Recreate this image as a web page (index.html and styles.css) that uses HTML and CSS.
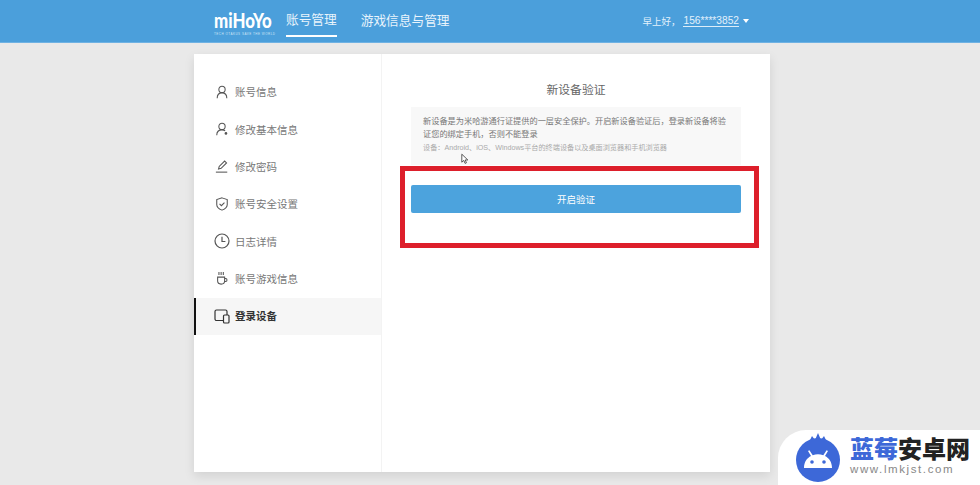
FILE: index.html
```html
<!DOCTYPE html>
<html lang="zh-CN">
<head>
  <meta charset="UTF-8">
  <meta name="viewport" content="width=device-width, initial-scale=1.0">
  <title>登录设备</title>
  <link rel="stylesheet" href="styles.css">
</head>
<body>

  <div class="header">
    <div class="header-inner">
      <div class="logo">
        <div class="logo-name">miHoYo</div>
        <div class="logo-tag">TECH OTAKUS SAVE THE WORLD</div>
      </div>
      <a class="nav-link active" href="#">账号管理</a>
      <a class="nav-link" href="#">游戏信息与管理</a>
      <div class="greeting">
        <span>早上好，</span>
        <a href="#">156****3852</a>
        <i class="caret"></i>
      </div>
    </div>
  </div>

  <div class="card">
    <div class="sidebar">
      <a class="side-item" href="#">
        <svg class="side-icon" viewBox="0 0 16 16"><circle cx="8" cy="5" r="3.6"/><path d="M2.5 15c0-3.6 2-6 5.5-6s5.500 2.400 5.500 6"/></svg>
        账号信息
      </a>
      <a class="side-item" href="#">
        <svg class="side-icon" viewBox="0 0 16 16"><circle cx="8" cy="5" r="3.600"/><path d="M2 15c0-3.600 2.200-6 6-6 1.500 0 2.700.4 3.600 1.100"/><circle class="dot" cx="12.500" cy="13" r="1.500"/></svg>
        修改基本信息
      </a>
      <a class="side-item" href="#">
        <svg class="side-icon" viewBox="0 0 16 16"><path d="M4 11.500l.8-3L11 2.300l2.200 2.200L7 10.700z"/><path d="M1 15h13"/></svg>
        修改密码
      </a>
      <a class="side-item" href="#">
        <svg class="side-icon" viewBox="0 0 16 16"><path d="M8 1l6 2v5.500c0 3.200-2.500 5.200-6 6.500-3.500-1.300-6-3.300-6-6.500V3z"/><path d="M5.200 7.800l2.100 2.100 3.500-3.600"/></svg>
        账号安全设置
      </a>
      <a class="side-item" href="#">
        <svg class="side-icon big" viewBox="0 0 16 16"><circle cx="8" cy="8" r="7"/><path d="M8 3.800V8.500h3.400"/></svg>
        日志详情
      </a>
      <a class="side-item" href="#">
        <svg class="side-icon" viewBox="0 0 16 16"><path d="M3 7h8v4.500c0 2-1.500 3.500-4 3.500s-4-1.500-4-3.500z"/><path d="M11 8.500h1.200c2 0 2 3.500 0 3.500H11"/><path d="M4.500 1v3.500M7 1v3.500M9.500 1v3.500"/></svg>
        账号游戏信息
      </a>
      <a class="side-item active" href="#">
        <svg class="side-icon big" viewBox="0 0 16 16"><path d="M9.500 12.500H2.500a1.500 1.500 0 0 1-1.500-1.500V3.500A1.500 1.500 0 0 1 2.500 2h9A1.500 1.500 0 0 1 13 3.500V7"/><rect x="9.500" y="7" width="5.500" height="8" rx="1"/></svg>
        登录设备
      </a>
    </div>

    <div class="main">
      <h1 class="main-title">新设备验证</h1>
      <div class="notice">
        <p>新设备是为米哈游通行证提供的一层安全保护。开启新设备验证后，登录新设备将验证您的绑定手机，否则不能登录</p>
        <p class="notice-sub">设备：Android、iOS、Windows平台的终端设备以及桌面浏览器和手机浏览器</p>
      </div>
      <button class="btn">开启验证</button>
    </div>
  </div>

  <!-- annotation on top of the screenshot -->
  <div class="red-box"></div>
  <svg class="cursor" viewBox="0 0 10 14"><path d="M1 1v10l2.500-2.200 1.600 3.700 1.700-.8-1.600-3.500H8.500z"/></svg>

  <div class="watermark">
    <svg class="wm-icon" viewBox="0 0 46 50">
      <path class="wm-blue" d="M14 10l3-6 3 4 3-7 3 7 3-4 3 6z"/>
      <circle class="wm-blue" cx="23" cy="28" r="22"/>
      <path class="wm-white" d="M9 36c0-6 3-10 7-12l-3-5 1.400-.8 3.300 5c3.500-1.300 7.100-1.300 10.600 0l3.300-5 1.400.8-3 5c4 2 7 6 7 12z"/>
      <circle class="wm-blue" cx="17" cy="30" r="1.800"/>
      <circle class="wm-blue" cx="29" cy="30" r="1.800"/>
    </svg>
    <div class="wm-text">
      <div class="wm-title"><span>蓝莓</span>安卓网</div>
      <div class="wm-url">www.lmkjst.com</div>
    </div>
  </div>

</body>
</html>
```

FILE: styles.css
```css
body {
  background-color: #e9e9e9;
  color: #666;
  font-family: "Liberation Sans", "Noto Sans CJK SC", sans-serif;
  margin: 0;
  padding: 0;
  height: 485px;
  overflow: hidden;
  position: relative;
}

a {
  text-decoration: none;
  color: inherit;
}

.header {
  background-color: #4b9fdb;
  height: 43px;
  border-bottom: 1px solid #6fb2e3;
  box-sizing: border-box;
}

.header-inner {
  width: 576px;
  margin-left: 194px;
  padding-left: 20px;
  padding-right: 20px;
  box-sizing: border-box;
  display: flex;
  align-items: center;
  height: 100%;
}

.logo {
  width: 72px;
  padding-top: 3px;
  color: white;
}

.logo-name {
  font-family: "Lato", sans-serif;
  font-size: 20px;
  font-weight: 900;
  line-height: 20px;
  white-space: nowrap;
  transform: scaleX(0.84);
  transform-origin: left;
}

.logo-tag {
  font-size: 3px;
  line-height: 4px;
  letter-spacing: 0.5px;
  margin-top: 2px;
  white-space: nowrap;
  color: #cfe5f6;
}

.nav-link {
  color: #e9f4fc;
  font-size: 12.700px;
  line-height: 30px;
  margin-right: 24px;
  height: 30px;
  box-sizing: border-box;
}

.nav-link.active {
  border-bottom: 2px solid white;
  margin-top: 2px;
  line-height: 26px;
  height: 30px;
}

.greeting {
  margin-left: auto;
  margin-right: 1px;
  color: #e3f1fb;
  font-size: 9.500px;
  display: flex;
  align-items: center;
}

.greeting a {
  border-bottom: 1px solid #dcedf9;
  font-size: 10.200px;
  line-height: 10px;
  margin-left: 3px;
}

.caret {
  width: 0;
  height: 0;
  border-left: 3.500px solid transparent;
  border-right: 3.500px solid transparent;
  border-top: 4px solid white;
  margin-left: 4px;
}

.card {
  position: absolute;
  left: 194px;
  top: 54px;
  width: 576px;
  height: 418px;
  background-color: white;
  box-shadow: 0 4px 10px rgba(0, 0, 0, 0.1);
  display: flex;
}

.sidebar {
  width: 188px;
  box-sizing: border-box;
  border-right: 1px solid #f3f3f3;
  padding-top: 20px;
}

.side-item {
  display: flex;
  align-items: center;
  height: 37.300px;
  padding-left: 21px;
  padding-bottom: 1.500px;
  font-size: 10.500px;
  color: #777;
  box-sizing: border-box;
}

.side-item.active {
  background-color: #f6f6f6;
  border-left: 2px solid #111;
  padding-left: 19px;
  color: #333;
  font-weight: bold;
}

.side-icon {
  width: 14px;
  height: 14px;
  margin-right: 6px;
  fill: none;
  stroke: #555;
  stroke-width: 1.200;
  flex-shrink: 0;
}

.side-icon.big {
  width: 16px;
  height: 16px;
  margin-left: -1px;
  margin-right: 5px;
}

.side-item.active .side-icon {
  stroke: #333;
}

.side-icon .dot {
  fill: #555;
  stroke: none;
}

.main {
  flex: 1;
  padding: 0 29px;
}

.main-title {
  font-size: 11.800px;
  font-weight: normal;
  color: #666;
  text-align: center;
  margin: 29px 0 0;
  line-height: 14px;
}

.notice {
  background-color: #f8f8f8;
  margin-top: 10px;
  padding: 8px 12px 0;
  height: 58px;
  box-sizing: border-box;
  font-size: 8.200px;
  line-height: 13px;
  color: #777;
}

.notice p {
  margin: 0;
}

.notice .notice-sub {
  font-size: 7.150px;
  color: #aaa;
  line-height: 12px;
  margin-top: 1px;
}

.btn {
  display: block;
  width: 100%;
  height: 28px;
  margin-top: 20px;
  border: none;
  border-radius: 2px;
  background-color: #4ca3dd;
  color: white;
  font-family: inherit;
  font-size: 9.500px;
  padding: 0;
}

.red-box {
  position: absolute;
  left: 400px;
  top: 166px;
  width: 359px;
  height: 82px;
  border: 5px solid #dd1f2b;
  box-sizing: border-box;
}

.cursor {
  position: absolute;
  left: 461px;
  top: 153px;
  width: 8px;
  height: 12px;
  fill: white;
  stroke: #333;
  stroke-width: 1;
}

.watermark {
  position: absolute;
  right: 0;
  bottom: 0;
  width: 202px;
  height: 55px;
  background-color: white;
  border-radius: 28px 0 0 0;
  display: flex;
  align-items: center;
  padding-left: 17px;
  box-sizing: border-box;
}

.wm-icon {
  width: 46px;
  height: 50px;
  margin-right: 9px;
  margin-top: -2px;
  flex-shrink: 0;
}

.wm-blue {
  fill: #3d68d8;
}

.wm-white {
  fill: white;
}

.wm-title {
  font-size: 24px;
  font-weight: 900;
  line-height: 26px;
  color: #222;
  white-space: nowrap;
  margin-top: -3px;
}

.wm-title span {
  color: #3d68d8;
}

.wm-url {
  font-size: 11.500px;
  letter-spacing: 1.600px;
  color: #888;
  line-height: 13px;
  white-space: nowrap;
}
```
